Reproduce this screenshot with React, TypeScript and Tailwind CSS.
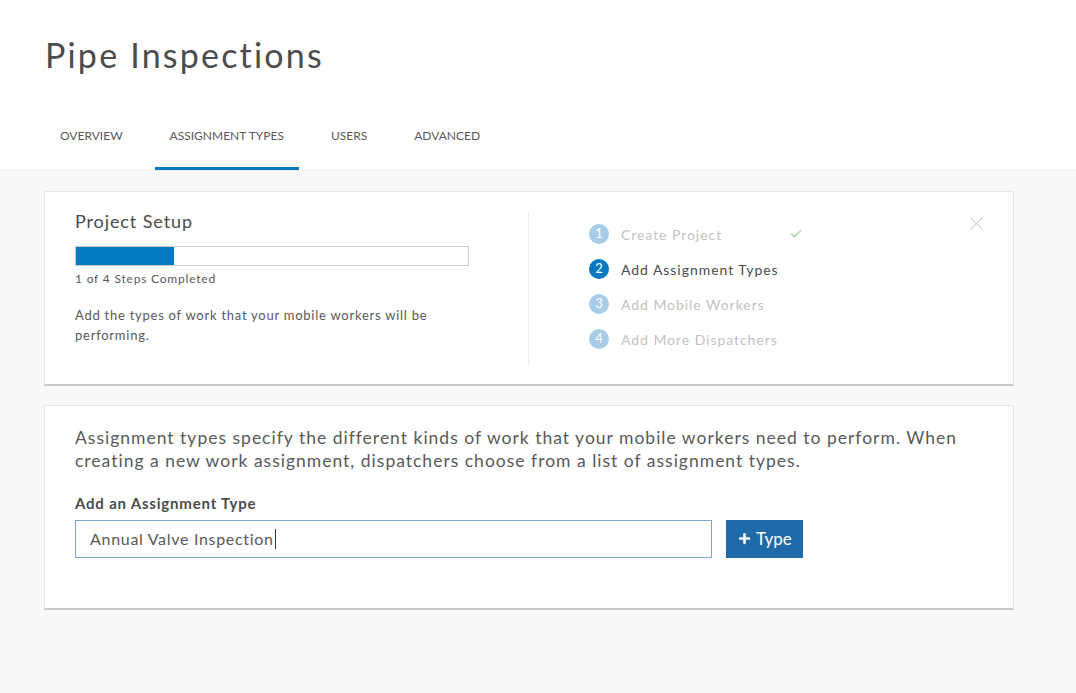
import React from 'react';
import { Check, X, Plus } from 'lucide-react';

const font = { fontFamily: 'Lato, "Open Sans", sans-serif' };

const tabs = ['Overview', 'Assignment Types', 'Users', 'Advanced'];

const steps = [
  { n: 1, label: 'Create Project', state: 'done' },
  { n: 2, label: 'Add Assignment Types', state: 'active' },
  { n: 3, label: 'Add Mobile Workers', state: 'todo' },
  { n: 4, label: 'Add More Dispatchers', state: 'todo' },
];

export default function App() {
  return (
    <div className="min-h-[693px] bg-[#f8f8f8] text-[#4c4c4c]" style={font}>
      <header className="bg-white border-b border-[#eeeeee]">
        <h1 className="pl-[45px] pt-[33px] text-[34px] leading-[44px] text-[#4c4c4c] tracking-[2.2px]">Pipe Inspections</h1>
        <nav className="flex gap-[17px] pl-[45px] mt-[47px]">
          {tabs.map((t) => (
            <div
              key={t}
              className={
                'px-[15px] h-[46px] flex items-start pt-[3px] text-[12px] uppercase text-[#595959] border-b-[3px] ' +
                (t === 'Assignment Types' ? 'border-[#0079c1]' : 'border-transparent')
              }
            >
              {t}
            </div>
          ))}
        </nav>
      </header>

      <main className="pl-[44px] pt-[20px] w-[1014px] flex flex-col gap-[19px]">
        <section className="bg-white border border-[#e6e6e6] border-b-[#c9c9c9] border-b-2 flex pl-[30px] pr-[30px] pt-[20px] pb-[19px]">
          <div className="w-[454px] border-r border-[#ececec] pr-[30px]">
            <h2 className="text-[18px] leading-[22px] text-[#4c4c4c] mt-[-2px] tracking-[0.9px]">Project Setup</h2>
            <div className="mt-[14px] w-[394px] h-[20px] border border-[#cccccc] bg-white">
              <div className="h-full bg-[#0079c1]" style={{ width: '25%' }} />
            </div>
            <p className="mt-[5px] text-[12px] leading-[16px] text-[#595959] tracking-[0.8px]">1 of 4 Steps Completed</p>
            <p className="mt-[18px] text-[13px] leading-[20px] text-[#595959] tracking-[0.75px] w-[370px]">
              Add the types of work that your mobile workers will be performing.
            </p>
            <div className="h-[20px]" />
          </div>
          <div className="flex-1 pl-[60px] pt-[12px] relative">
            <ul className="flex flex-col gap-[15px]">
              {steps.map((s) => (
                <li key={s.n} className="flex items-center h-[20px]">
                  <span
                    className={
                      'w-[20px] h-[20px] rounded-full flex items-center justify-center text-[13px] text-white ' +
                      (s.state === 'active' ? 'bg-[#0079c1]' : 'bg-[#a6cce8]')
                    }
                  >
                    {s.n}
                  </span>
                  <span
                    className={
                      'ml-[12px] text-[14px] tracking-[0.95px] w-[168px] ' +
                      (s.state === 'active' ? 'text-[#4c4c4c]' : 'text-[#c2c2c2]')
                    }
                  >
                    {s.label}
                  </span>
                  {s.state === 'done' && <Check size={14} strokeWidth={3} className="text-[#b6d7b8]" />}
                </li>
              ))}
            </ul>
            <X size={23} strokeWidth={1.1} className="absolute right-[-5px] top-[0px] text-[#c8c8c8]" />
          </div>
        </section>

        <section className="bg-white border border-[#e6e6e6] border-b-[#c9c9c9] border-b-2 pl-[30px] pr-[30px] pt-[20px] pb-[50px]">
          <p className="text-[17.5px] leading-[23px] text-[#595959] tracking-[1px]">
            Assignment types specify the different kinds of work that your mobile workers need to perform. When
            creating a new work assignment, dispatchers choose from a list of assignment types.
          </p>
          <label className="block mt-[20px] text-[15px] font-bold text-[#4c4c4c] tracking-[0.8px]">Add an Assignment Type</label>
          <div className="flex items-center gap-[14px] mt-[5px]">
            <div className="w-[637px] h-[38px] border border-[#7fa4d6] flex items-center px-[14px] text-[16px] text-[#595959] tracking-[0.7px]">
              Annual Valve Inspection<span className="inline-block w-px h-[20px] bg-[#333] ml-[1px]" />
            </div>
            <button className="h-[38px] px-[11px] bg-[#1f6aa8] text-white text-[17px] flex items-center gap-[4px]">
              <Plus size={15} strokeWidth={4} />
              Type
            </button>
          </div>
        </section>
      </main>
    </div>
  );
}
